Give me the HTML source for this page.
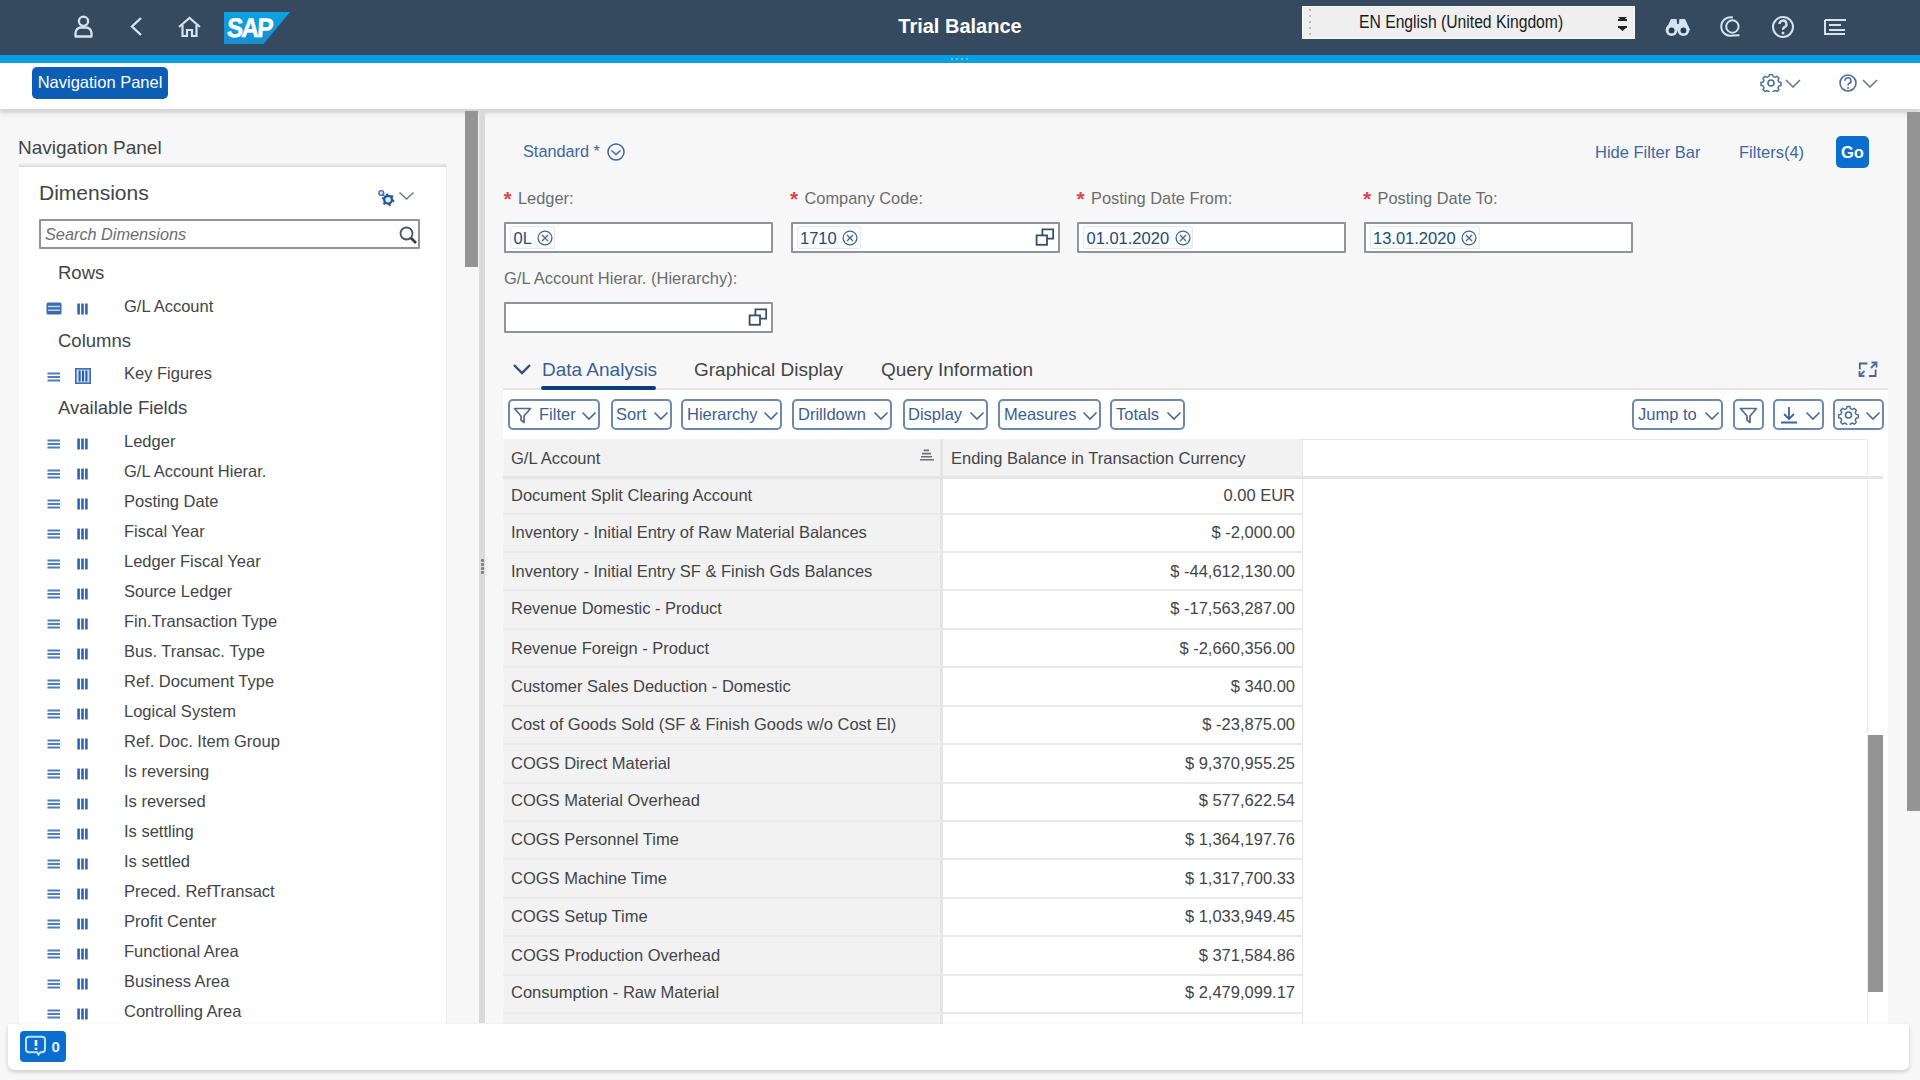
<!DOCTYPE html>
<html><head><meta charset="utf-8"><title>Trial Balance</title>
<style>
html,body{margin:0;padding:0;width:1920px;height:1080px;overflow:hidden;background:#f7f7f7;font-family:"Liberation Sans", sans-serif;}
.t{position:absolute;white-space:nowrap;}
.r{position:absolute;box-sizing:border-box;}
</style></head><body>
<div class="r" style="left:0px;top:0px;width:1920px;height:55px;background:#354a5f"></div>
<div class="r" style="left:0px;top:55px;width:1920px;height:8px;background:#0a9fe3"></div>
<div class="r" style="left:951px;top:58px;width:2px;height:2px;background:#5fc0ee"></div>
<div class="r" style="left:956px;top:58px;width:2px;height:2px;background:#5fc0ee"></div>
<div class="r" style="left:961px;top:58px;width:2px;height:2px;background:#5fc0ee"></div>
<div class="r" style="left:966px;top:58px;width:2px;height:2px;background:#5fc0ee"></div>
<svg class="r" style="left:73px;top:15px" width="21" height="23" viewBox="0 0 21 23"><circle cx="10.5" cy="6.2" r="4.6" fill="none" stroke="#d1e3f4" stroke-width="2.3"/><path d="M2.5 21.5 v-3.5 a5.5 5.5 0 0 1 5.5 -5.5 h5 a5.5 5.5 0 0 1 5.5 5.5 v3.5 z" fill="none" stroke="#d1e3f4" stroke-width="2.3" stroke-linejoin="round"/></svg>
<svg class="r" style="left:129px;top:16px" width="15" height="21" viewBox="0 0 15 21"><path d="M12 2 L3 10.5 L12 19" fill="none" stroke="#d1e3f4" stroke-width="2.4"/></svg>
<svg class="r" style="left:177px;top:16px" width="25" height="21" viewBox="0 0 25 21"><path d="M2 11 L12.5 2 L23 11" fill="none" stroke="#d1e3f4" stroke-width="2.2"/><path d="M5.5 9 V20 H10 V14 H15 V20 H19.5 V9" fill="none" stroke="#d1e3f4" stroke-width="2.2"/></svg>
<svg class="r" style="left:224px;top:12px" width="67" height="32" viewBox="0 0 67 32"><defs><linearGradient id="sapg" x1="0" y1="0" x2="0" y2="1"><stop offset="0" stop-color="#0ca3e3"/><stop offset="1" stop-color="#168fd3"/></linearGradient></defs><path d="M0 0 H66 L39.5 32 H0 Z" fill="url(#sapg)"/><text x="0" y="0" font-family="Liberation Sans" font-weight="bold" font-size="25" fill="#fff" stroke="#fff" stroke-width="0.5" letter-spacing="-1.8" transform="translate(2.5,25.3) scale(0.97,1.08) skewX(-4)">SAP</text></svg>
<div class="t" style="left:660px;width:600px;text-align:center;top:16px;font-size:20px;line-height:20px;color:#ffffff;font-weight:bold;">Trial Balance</div>
<div class="r" style="left:1302px;top:6px;width:333px;height:33px;background:#efefef;border:1px solid #fafafa"></div>
<div class="r" style="left:1308.5px;top:8.5px;width:2.5px;height:2.5px;background:#a8a8a8;border-radius:1px"></div>
<div class="r" style="left:1308.5px;top:14.5px;width:2.5px;height:2.5px;background:#a8a8a8;border-radius:1px"></div>
<div class="r" style="left:1308.5px;top:20.5px;width:2.5px;height:2.5px;background:#a8a8a8;border-radius:1px"></div>
<div class="r" style="left:1308.5px;top:26.5px;width:2.5px;height:2.5px;background:#a8a8a8;border-radius:1px"></div>
<div class="r" style="left:1308.5px;top:32.5px;width:2.5px;height:2.5px;background:#a8a8a8;border-radius:1px"></div>
<div class="t" style="left:1359px;top:13px;font-size:18px;line-height:18px;color:#1a1a1a;transform:scaleX(0.872);transform-origin:0 0;">EN English (United Kingdom)</div>
<svg class="r" style="left:1617px;top:16px" width="11" height="16" viewBox="0 0 11 16"><path d="M1 1 H10 L5.5 5 Z" fill="#222"/><path d="M1 4 H10" stroke="#222" stroke-width="2"/><path d="M1 11 H10 L5.5 15 Z" fill="#222"/><path d="M1 11 H10" stroke="#222" stroke-width="2"/></svg>
<svg class="r" style="left:1665px;top:17px" width="26" height="20" viewBox="0 0 26 20"><circle cx="6.6" cy="13.1" r="6" fill="#d1e3f4"/><circle cx="18.4" cy="13.1" r="6" fill="#d1e3f4"/><path d="M6 1.9 H11.6 L12.8 13 H0.8 Z M14.4 1.9 H20 L25.2 13 H13.2 Z" fill="#d1e3f4"/><rect x="10" y="7" width="6" height="6" fill="#d1e3f4"/><circle cx="6.6" cy="13.4" r="2.9" fill="#2a3b4e"/><circle cx="18.4" cy="13.4" r="2.9" fill="#2a3b4e"/></svg>
<svg class="r" style="left:1718px;top:14px" width="26" height="26" viewBox="0 0 26 26"><circle cx="14.4" cy="12.5" r="6.2" fill="none" stroke="#d1e3f4" stroke-width="2"/><path d="M14.9 3.5 A9.3 9.3 0 1 0 14.9 21.5 L21.5 21.2" fill="none" stroke="#d1e3f4" stroke-width="2"/></svg>
<svg class="r" style="left:1771px;top:15px" width="24" height="24" viewBox="0 0 24 24"><circle cx="12" cy="12" r="10" fill="none" stroke="#d1e3f4" stroke-width="2"/><path d="M8.5 9 a3.5 3.5 0 1 1 5 3.2 c-1.2 .6 -1.5 1.3 -1.5 2.6" fill="none" stroke="#d1e3f4" stroke-width="2.4"/><circle cx="12" cy="18" r="1.5" fill="#d1e3f4"/></svg>
<svg class="r" style="left:1823px;top:18px" width="25" height="18" viewBox="0 0 25 18"><path d="M2 2 H23 M2 2 V16 H22 M6 7 H18 M6 12 H22" fill="none" stroke="#d1e3f4" stroke-width="2"/></svg>
<div class="r" style="left:0px;top:63px;width:1920px;height:46px;background:#fff;box-shadow:0 3.5px 2px rgba(0,0,0,0.085), 0 6px 6px rgba(0,0,0,0.05)"></div>
<div class="r" style="left:32px;top:67px;width:136px;height:32px;background:#0b5eb4;border-radius:5px"></div>
<div class="t" style="left:-200px;width:600px;text-align:center;top:74px;font-size:16.5px;line-height:16.5px;color:#ffffff;">Navigation Panel</div>
<svg class="r" style="left:1760px;top:74px" width="22" height="18" viewBox="0 0 22 18"><circle cx="11" cy="9" r="3" fill="none" stroke="#4a6e98" stroke-width="1.6"/><path d="M9.5 1.5 h3 l.5 2 l2 1 l2 -1 l2 2 l-1 2 l1 2 l2 .5 v3 l-2 .5 l-1 2 l1 2 l-2 2 l-2 -1 l-2 1 l-.5 2 h-3 l-.5 -2 l-2 -1 l-2 1 l-2 -2 l1 -2 l-1 -2 l-2 -.5 v-3 l2 -.5 l1 -2 l-1 -2 l2 -2 l2 1 l2 -1 z" fill="none" stroke="#4a6e98" stroke-width="1.5" transform="translate(0,-1) scale(1,0.95)"/></svg>
<svg class="r" style="left:1785px;top:79px" width="16" height="9" viewBox="0 0 16 9"><path d="M1 1 L8 8 L15 1" fill="none" stroke="#6a7a8a" stroke-width="1.6"/></svg>
<svg class="r" style="left:1838px;top:74px" width="20" height="18" viewBox="0 0 20 18"><circle cx="10" cy="9" r="8" fill="none" stroke="#4a6e98" stroke-width="1.6"/><path d="M7 6.8 a3 3 0 1 1 4 2.8 c-.9 .4 -1 1 -1 2" fill="none" stroke="#4a6e98" stroke-width="1.6"/><circle cx="10" cy="14" r="1" fill="#4a6e98"/></svg>
<svg class="r" style="left:1862px;top:79px" width="16" height="9" viewBox="0 0 16 9"><path d="M1 1 L8 8 L15 1" fill="none" stroke="#6a7a8a" stroke-width="1.6"/></svg>
<div class="t" style="left:18px;top:138px;font-size:19px;line-height:19px;color:#424548;">Navigation Panel</div>
<div class="r" style="left:19px;top:163px;width:428px;height:4px;background:linear-gradient(to bottom, rgba(0,0,0,0), rgba(0,0,0,0.13))"></div>
<div class="r" style="left:19px;top:167px;width:428px;height:860px;background:#fff;border-right:1px solid #ededed"></div>
<div class="t" style="left:39px;top:182px;font-size:21px;line-height:21px;color:#424548;">Dimensions</div>
<svg class="r" style="left:376px;top:188px" width="19" height="19" viewBox="0 0 19 19"><circle cx="5.3" cy="5" r="2.4" fill="#cfe2f7" stroke="#3d70b4" stroke-width="1.4"/><path d="M7 6.8 L9.5 9.3" stroke="#3d70b4" stroke-width="1.4"/><circle cx="12.1" cy="11.8" r="3.9" fill="#d6f0ff" stroke="#24558f" stroke-width="2.3"/><circle cx="12.1" cy="11.8" r="5.4" fill="none" stroke="#24558f" stroke-width="1.8" stroke-dasharray="2.2 3.45"/></svg>
<svg class="r" style="left:398px;top:191px" width="17" height="10" viewBox="0 0 17 10"><path d="M1.5 1.5 L8.5 8 L15.5 1.5" fill="none" stroke="#6a7a8a" stroke-width="1.5"/></svg>
<div class="r" style="left:39px;top:219px;width:381px;height:30px;background:#fff;border:2px solid #909397;border-radius:1px"></div>
<div class="t" style="left:45px;top:226px;font-size:16.3px;line-height:16.3px;color:#6a6d70;font-style:italic;">Search Dimensions</div>
<svg class="r" style="left:398px;top:225px" width="20" height="20" viewBox="0 0 20 20"><circle cx="8.5" cy="8.5" r="6" fill="none" stroke="#4d5560" stroke-width="1.8"/><path d="M13 13 L18 18" stroke="#2b3a55" stroke-width="2.6"/></svg>
<div class="t" style="left:58px;top:264px;font-size:18.5px;line-height:18.5px;color:#424548;">Rows</div>
<div class="t" style="left:58px;top:332px;font-size:18.5px;line-height:18.5px;color:#424548;">Columns</div>
<div class="t" style="left:58px;top:399px;font-size:18.5px;line-height:18.5px;color:#424548;">Available Fields</div>
<svg class="r" style="left:46px;top:302px" width="16" height="13" viewBox="0 0 16 13"><rect x="0.5" y="0.5" width="15" height="12" rx="1.5" fill="#3a6cae"/><path d="M2 4.6 H14 M2 8.2 H14" stroke="#b9d2ee" stroke-width="1.5"/></svg>
<svg class="r" style="left:77px;top:303px" width="11" height="12" viewBox="0 0 11 12"><path d="M1.6 0.5 V11.5 M5.5 0.5 V11.5 M9.4 0.5 V11.5" stroke="#2f65b3" stroke-width="2.6"/></svg>
<div class="t" style="left:124px;top:298px;font-size:16.5px;line-height:16.5px;color:#424548;">G/L Account</div>
<svg class="r" style="left:47px;top:371.5px" width="14" height="10" viewBox="0 0 14 10"><path d="M0.5 1.5 H13 M0.5 5 H13 M0.5 8.5 H13" stroke="#4d7fc2" stroke-width="2.2"/></svg>
<svg class="r" style="left:75px;top:368px" width="16" height="16" viewBox="0 0 16 16"><rect x="0.8" y="0.8" width="14.4" height="14.4" fill="#c9dcf3" stroke="#3c6fb5" stroke-width="1.6"/><path d="M4.6 2.5 V13.5 M8 2.5 V13.5 M11.4 2.5 V13.5" stroke="#2a5ea8" stroke-width="2"/></svg>
<div class="t" style="left:124px;top:365px;font-size:16.5px;line-height:16.5px;color:#424548;">Key Figures</div>
<svg class="r" style="left:47px;top:439px" width="14" height="10" viewBox="0 0 14 10"><path d="M0.5 1.5 H13 M0.5 5 H13 M0.5 8.5 H13" stroke="#4d7fc2" stroke-width="2.2"/></svg>
<svg class="r" style="left:77px;top:438px" width="11" height="12" viewBox="0 0 11 12"><path d="M1.6 0.5 V11.5 M5.5 0.5 V11.5 M9.4 0.5 V11.5" stroke="#2f65b3" stroke-width="2.6"/></svg>
<div class="t" style="left:124px;top:433px;font-size:16.5px;line-height:16.5px;color:#424548;">Ledger</div>
<svg class="r" style="left:47px;top:469px" width="14" height="10" viewBox="0 0 14 10"><path d="M0.5 1.5 H13 M0.5 5 H13 M0.5 8.5 H13" stroke="#4d7fc2" stroke-width="2.2"/></svg>
<svg class="r" style="left:77px;top:468px" width="11" height="12" viewBox="0 0 11 12"><path d="M1.6 0.5 V11.5 M5.5 0.5 V11.5 M9.4 0.5 V11.5" stroke="#2f65b3" stroke-width="2.6"/></svg>
<div class="t" style="left:124px;top:463px;font-size:16.5px;line-height:16.5px;color:#424548;">G/L Account Hierar.</div>
<svg class="r" style="left:47px;top:499px" width="14" height="10" viewBox="0 0 14 10"><path d="M0.5 1.5 H13 M0.5 5 H13 M0.5 8.5 H13" stroke="#4d7fc2" stroke-width="2.2"/></svg>
<svg class="r" style="left:77px;top:498px" width="11" height="12" viewBox="0 0 11 12"><path d="M1.6 0.5 V11.5 M5.5 0.5 V11.5 M9.4 0.5 V11.5" stroke="#2f65b3" stroke-width="2.6"/></svg>
<div class="t" style="left:124px;top:493px;font-size:16.5px;line-height:16.5px;color:#424548;">Posting Date</div>
<svg class="r" style="left:47px;top:529px" width="14" height="10" viewBox="0 0 14 10"><path d="M0.5 1.5 H13 M0.5 5 H13 M0.5 8.5 H13" stroke="#4d7fc2" stroke-width="2.2"/></svg>
<svg class="r" style="left:77px;top:528px" width="11" height="12" viewBox="0 0 11 12"><path d="M1.6 0.5 V11.5 M5.5 0.5 V11.5 M9.4 0.5 V11.5" stroke="#2f65b3" stroke-width="2.6"/></svg>
<div class="t" style="left:124px;top:523px;font-size:16.5px;line-height:16.5px;color:#424548;">Fiscal Year</div>
<svg class="r" style="left:47px;top:559px" width="14" height="10" viewBox="0 0 14 10"><path d="M0.5 1.5 H13 M0.5 5 H13 M0.5 8.5 H13" stroke="#4d7fc2" stroke-width="2.2"/></svg>
<svg class="r" style="left:77px;top:558px" width="11" height="12" viewBox="0 0 11 12"><path d="M1.6 0.5 V11.5 M5.5 0.5 V11.5 M9.4 0.5 V11.5" stroke="#2f65b3" stroke-width="2.6"/></svg>
<div class="t" style="left:124px;top:553px;font-size:16.5px;line-height:16.5px;color:#424548;">Ledger Fiscal Year</div>
<svg class="r" style="left:47px;top:589px" width="14" height="10" viewBox="0 0 14 10"><path d="M0.5 1.5 H13 M0.5 5 H13 M0.5 8.5 H13" stroke="#4d7fc2" stroke-width="2.2"/></svg>
<svg class="r" style="left:77px;top:588px" width="11" height="12" viewBox="0 0 11 12"><path d="M1.6 0.5 V11.5 M5.5 0.5 V11.5 M9.4 0.5 V11.5" stroke="#2f65b3" stroke-width="2.6"/></svg>
<div class="t" style="left:124px;top:583px;font-size:16.5px;line-height:16.5px;color:#424548;">Source Ledger</div>
<svg class="r" style="left:47px;top:619px" width="14" height="10" viewBox="0 0 14 10"><path d="M0.5 1.5 H13 M0.5 5 H13 M0.5 8.5 H13" stroke="#4d7fc2" stroke-width="2.2"/></svg>
<svg class="r" style="left:77px;top:618px" width="11" height="12" viewBox="0 0 11 12"><path d="M1.6 0.5 V11.5 M5.5 0.5 V11.5 M9.4 0.5 V11.5" stroke="#2f65b3" stroke-width="2.6"/></svg>
<div class="t" style="left:124px;top:613px;font-size:16.5px;line-height:16.5px;color:#424548;">Fin.Transaction Type</div>
<svg class="r" style="left:47px;top:649px" width="14" height="10" viewBox="0 0 14 10"><path d="M0.5 1.5 H13 M0.5 5 H13 M0.5 8.5 H13" stroke="#4d7fc2" stroke-width="2.2"/></svg>
<svg class="r" style="left:77px;top:648px" width="11" height="12" viewBox="0 0 11 12"><path d="M1.6 0.5 V11.5 M5.5 0.5 V11.5 M9.4 0.5 V11.5" stroke="#2f65b3" stroke-width="2.6"/></svg>
<div class="t" style="left:124px;top:643px;font-size:16.5px;line-height:16.5px;color:#424548;">Bus. Transac. Type</div>
<svg class="r" style="left:47px;top:679px" width="14" height="10" viewBox="0 0 14 10"><path d="M0.5 1.5 H13 M0.5 5 H13 M0.5 8.5 H13" stroke="#4d7fc2" stroke-width="2.2"/></svg>
<svg class="r" style="left:77px;top:678px" width="11" height="12" viewBox="0 0 11 12"><path d="M1.6 0.5 V11.5 M5.5 0.5 V11.5 M9.4 0.5 V11.5" stroke="#2f65b3" stroke-width="2.6"/></svg>
<div class="t" style="left:124px;top:673px;font-size:16.5px;line-height:16.5px;color:#424548;">Ref. Document Type</div>
<svg class="r" style="left:47px;top:709px" width="14" height="10" viewBox="0 0 14 10"><path d="M0.5 1.5 H13 M0.5 5 H13 M0.5 8.5 H13" stroke="#4d7fc2" stroke-width="2.2"/></svg>
<svg class="r" style="left:77px;top:708px" width="11" height="12" viewBox="0 0 11 12"><path d="M1.6 0.5 V11.5 M5.5 0.5 V11.5 M9.4 0.5 V11.5" stroke="#2f65b3" stroke-width="2.6"/></svg>
<div class="t" style="left:124px;top:703px;font-size:16.5px;line-height:16.5px;color:#424548;">Logical System</div>
<svg class="r" style="left:47px;top:739px" width="14" height="10" viewBox="0 0 14 10"><path d="M0.5 1.5 H13 M0.5 5 H13 M0.5 8.5 H13" stroke="#4d7fc2" stroke-width="2.2"/></svg>
<svg class="r" style="left:77px;top:738px" width="11" height="12" viewBox="0 0 11 12"><path d="M1.6 0.5 V11.5 M5.5 0.5 V11.5 M9.4 0.5 V11.5" stroke="#2f65b3" stroke-width="2.6"/></svg>
<div class="t" style="left:124px;top:733px;font-size:16.5px;line-height:16.5px;color:#424548;">Ref. Doc. Item Group</div>
<svg class="r" style="left:47px;top:769px" width="14" height="10" viewBox="0 0 14 10"><path d="M0.5 1.5 H13 M0.5 5 H13 M0.5 8.5 H13" stroke="#4d7fc2" stroke-width="2.2"/></svg>
<svg class="r" style="left:77px;top:768px" width="11" height="12" viewBox="0 0 11 12"><path d="M1.6 0.5 V11.5 M5.5 0.5 V11.5 M9.4 0.5 V11.5" stroke="#2f65b3" stroke-width="2.6"/></svg>
<div class="t" style="left:124px;top:763px;font-size:16.5px;line-height:16.5px;color:#424548;">Is reversing</div>
<svg class="r" style="left:47px;top:799px" width="14" height="10" viewBox="0 0 14 10"><path d="M0.5 1.5 H13 M0.5 5 H13 M0.5 8.5 H13" stroke="#4d7fc2" stroke-width="2.2"/></svg>
<svg class="r" style="left:77px;top:798px" width="11" height="12" viewBox="0 0 11 12"><path d="M1.6 0.5 V11.5 M5.5 0.5 V11.5 M9.4 0.5 V11.5" stroke="#2f65b3" stroke-width="2.6"/></svg>
<div class="t" style="left:124px;top:793px;font-size:16.5px;line-height:16.5px;color:#424548;">Is reversed</div>
<svg class="r" style="left:47px;top:829px" width="14" height="10" viewBox="0 0 14 10"><path d="M0.5 1.5 H13 M0.5 5 H13 M0.5 8.5 H13" stroke="#4d7fc2" stroke-width="2.2"/></svg>
<svg class="r" style="left:77px;top:828px" width="11" height="12" viewBox="0 0 11 12"><path d="M1.6 0.5 V11.5 M5.5 0.5 V11.5 M9.4 0.5 V11.5" stroke="#2f65b3" stroke-width="2.6"/></svg>
<div class="t" style="left:124px;top:823px;font-size:16.5px;line-height:16.5px;color:#424548;">Is settling</div>
<svg class="r" style="left:47px;top:859px" width="14" height="10" viewBox="0 0 14 10"><path d="M0.5 1.5 H13 M0.5 5 H13 M0.5 8.5 H13" stroke="#4d7fc2" stroke-width="2.2"/></svg>
<svg class="r" style="left:77px;top:858px" width="11" height="12" viewBox="0 0 11 12"><path d="M1.6 0.5 V11.5 M5.5 0.5 V11.5 M9.4 0.5 V11.5" stroke="#2f65b3" stroke-width="2.6"/></svg>
<div class="t" style="left:124px;top:853px;font-size:16.5px;line-height:16.5px;color:#424548;">Is settled</div>
<svg class="r" style="left:47px;top:889px" width="14" height="10" viewBox="0 0 14 10"><path d="M0.5 1.5 H13 M0.5 5 H13 M0.5 8.5 H13" stroke="#4d7fc2" stroke-width="2.2"/></svg>
<svg class="r" style="left:77px;top:888px" width="11" height="12" viewBox="0 0 11 12"><path d="M1.6 0.5 V11.5 M5.5 0.5 V11.5 M9.4 0.5 V11.5" stroke="#2f65b3" stroke-width="2.6"/></svg>
<div class="t" style="left:124px;top:883px;font-size:16.5px;line-height:16.5px;color:#424548;">Preced. RefTransact</div>
<svg class="r" style="left:47px;top:919px" width="14" height="10" viewBox="0 0 14 10"><path d="M0.5 1.5 H13 M0.5 5 H13 M0.5 8.5 H13" stroke="#4d7fc2" stroke-width="2.2"/></svg>
<svg class="r" style="left:77px;top:918px" width="11" height="12" viewBox="0 0 11 12"><path d="M1.6 0.5 V11.5 M5.5 0.5 V11.5 M9.4 0.5 V11.5" stroke="#2f65b3" stroke-width="2.6"/></svg>
<div class="t" style="left:124px;top:913px;font-size:16.5px;line-height:16.5px;color:#424548;">Profit Center</div>
<svg class="r" style="left:47px;top:949px" width="14" height="10" viewBox="0 0 14 10"><path d="M0.5 1.5 H13 M0.5 5 H13 M0.5 8.5 H13" stroke="#4d7fc2" stroke-width="2.2"/></svg>
<svg class="r" style="left:77px;top:948px" width="11" height="12" viewBox="0 0 11 12"><path d="M1.6 0.5 V11.5 M5.5 0.5 V11.5 M9.4 0.5 V11.5" stroke="#2f65b3" stroke-width="2.6"/></svg>
<div class="t" style="left:124px;top:943px;font-size:16.5px;line-height:16.5px;color:#424548;">Functional Area</div>
<svg class="r" style="left:47px;top:979px" width="14" height="10" viewBox="0 0 14 10"><path d="M0.5 1.5 H13 M0.5 5 H13 M0.5 8.5 H13" stroke="#4d7fc2" stroke-width="2.2"/></svg>
<svg class="r" style="left:77px;top:978px" width="11" height="12" viewBox="0 0 11 12"><path d="M1.6 0.5 V11.5 M5.5 0.5 V11.5 M9.4 0.5 V11.5" stroke="#2f65b3" stroke-width="2.6"/></svg>
<div class="t" style="left:124px;top:973px;font-size:16.5px;line-height:16.5px;color:#424548;">Business Area</div>
<svg class="r" style="left:47px;top:1009px" width="14" height="10" viewBox="0 0 14 10"><path d="M0.5 1.5 H13 M0.5 5 H13 M0.5 8.5 H13" stroke="#4d7fc2" stroke-width="2.2"/></svg>
<svg class="r" style="left:77px;top:1008px" width="11" height="12" viewBox="0 0 11 12"><path d="M1.6 0.5 V11.5 M5.5 0.5 V11.5 M9.4 0.5 V11.5" stroke="#2f65b3" stroke-width="2.6"/></svg>
<div class="t" style="left:124px;top:1003px;font-size:16.5px;line-height:16.5px;color:#424548;">Controlling Area</div>
<div class="r" style="left:465px;top:111px;width:13px;height:156px;background:#949494"></div>
<div class="r" style="left:479px;top:110px;width:6px;height:913px;background:#dadada"></div>
<div class="r" style="left:485px;top:557px;width:3px;height:19px;background:#eef2f6"></div>
<div class="r" style="left:480.5px;top:559.0px;width:3.5px;height:2.6px;background:#808080;border-radius:1px"></div>
<div class="r" style="left:480.5px;top:563.1px;width:3.5px;height:2.6px;background:#808080;border-radius:1px"></div>
<div class="r" style="left:480.5px;top:567.2px;width:3.5px;height:2.6px;background:#808080;border-radius:1px"></div>
<div class="r" style="left:480.5px;top:571.3px;width:3.5px;height:2.6px;background:#808080;border-radius:1px"></div>
<div class="t" style="left:523px;top:143px;font-size:16.3px;line-height:16.3px;color:#3e67a0;">Standard *</div>
<svg class="r" style="left:605px;top:143px" width="22" height="18" viewBox="0 0 22 18"><circle cx="11" cy="9" r="8" fill="none" stroke="#3e67a0" stroke-width="1.5"/><path d="M6.5 7.5 L11 11.5 L15.5 7.5" fill="none" stroke="#3e67a0" stroke-width="1.5"/></svg>
<div class="t" style="left:1595px;top:144px;font-size:16.5px;line-height:16.5px;color:#3e67a0;">Hide Filter Bar</div>
<div class="t" style="left:1739px;top:144px;font-size:16.5px;line-height:16.5px;color:#3e67a0;">Filters(4)</div>
<div class="r" style="left:1836px;top:136px;width:33px;height:32px;background:#0a6ed1;border-radius:5px"></div>
<div class="t" style="left:1552.5px;width:600px;text-align:center;top:144px;font-size:16.5px;line-height:16.5px;color:#fff;font-weight:bold;">Go</div>
<div class="t" style="left:503.5px;top:188px;font-size:21px;line-height:21px;color:#d9464a;font-weight:bold;">*</div>
<div class="t" style="left:518px;top:190px;font-size:16.4px;line-height:16.4px;color:#6a6d70;">Ledger:</div>
<div class="r" style="left:504px;top:222px;width:269px;height:31px;background:#fff;border:2px solid #909397;border-radius:1px"></div>
<div class="t" style="left:790.0px;top:188px;font-size:21px;line-height:21px;color:#d9464a;font-weight:bold;">*</div>
<div class="t" style="left:804.5px;top:190px;font-size:16.4px;line-height:16.4px;color:#6a6d70;">Company Code:</div>
<div class="r" style="left:790.5px;top:222px;width:269px;height:31px;background:#fff;border:2px solid #909397;border-radius:1px"></div>
<div class="t" style="left:1076.5px;top:188px;font-size:21px;line-height:21px;color:#d9464a;font-weight:bold;">*</div>
<div class="t" style="left:1091px;top:190px;font-size:16.4px;line-height:16.4px;color:#6a6d70;">Posting Date From:</div>
<div class="r" style="left:1077px;top:222px;width:269px;height:31px;background:#fff;border:2px solid #909397;border-radius:1px"></div>
<div class="t" style="left:1363.0px;top:188px;font-size:21px;line-height:21px;color:#d9464a;font-weight:bold;">*</div>
<div class="t" style="left:1377.5px;top:190px;font-size:16.4px;line-height:16.4px;color:#6a6d70;">Posting Date To:</div>
<div class="r" style="left:1363.5px;top:222px;width:269px;height:31px;background:#fff;border:2px solid #909397;border-radius:1px"></div>
<div class="r" style="left:510px;top:226px;width:45px;height:23px;background:#f9fbfd;border:1px solid #e6ebf0;border-radius:2px"></div>
<div class="t" style="left:513.5px;top:230px;font-size:16.5px;line-height:16.5px;color:#2a4a70;">0L</div>
<svg class="r" style="left:537.4px;top:229.5px" width="16" height="16" viewBox="0 0 16 16"><circle cx="8" cy="8" r="6.9" fill="none" stroke="#4a6489" stroke-width="1.3"/><path d="M5 5 L11 11 M11 5 L5 11" stroke="#4a6489" stroke-width="1.3"/></svg>
<div class="r" style="left:796.5px;top:226px;width:64px;height:23px;background:#f9fbfd;border:1px solid #e6ebf0;border-radius:2px"></div>
<div class="t" style="left:800.0px;top:230px;font-size:16.5px;line-height:16.5px;color:#2a4a70;">1710</div>
<svg class="r" style="left:842.2px;top:229.5px" width="16" height="16" viewBox="0 0 16 16"><circle cx="8" cy="8" r="6.9" fill="none" stroke="#4a6489" stroke-width="1.3"/><path d="M5 5 L11 11 M11 5 L5 11" stroke="#4a6489" stroke-width="1.3"/></svg>
<div class="r" style="left:1083px;top:226px;width:110px;height:23px;background:#f9fbfd;border:1px solid #e6ebf0;border-radius:2px"></div>
<div class="t" style="left:1086.5px;top:230px;font-size:16.5px;line-height:16.5px;color:#2a4a70;">01.01.2020</div>
<svg class="r" style="left:1174.6px;top:229.5px" width="16" height="16" viewBox="0 0 16 16"><circle cx="8" cy="8" r="6.9" fill="none" stroke="#4a6489" stroke-width="1.3"/><path d="M5 5 L11 11 M11 5 L5 11" stroke="#4a6489" stroke-width="1.3"/></svg>
<div class="r" style="left:1369.5px;top:226px;width:110px;height:23px;background:#f9fbfd;border:1px solid #e6ebf0;border-radius:2px"></div>
<div class="t" style="left:1373.0px;top:230px;font-size:16.5px;line-height:16.5px;color:#2a4a70;">13.01.2020</div>
<svg class="r" style="left:1461.1px;top:229.5px" width="16" height="16" viewBox="0 0 16 16"><circle cx="8" cy="8" r="6.9" fill="none" stroke="#4a6489" stroke-width="1.3"/><path d="M5 5 L11 11 M11 5 L5 11" stroke="#4a6489" stroke-width="1.3"/></svg>
<svg class="r" style="left:1035px;top:228px" width="19" height="18" viewBox="0 0 19 18"><rect x="1.6" y="7.4" width="10.4" height="9.4" fill="none" stroke="#3a4d68" stroke-width="1.8"/><path d="M7.4 7.4 V1.4 H18.2 V10.7 H12" fill="none" stroke="#3a4d68" stroke-width="1.8"/></svg>
<div class="t" style="left:504px;top:270px;font-size:16.5px;line-height:16.5px;color:#6a6d70;">G/L Account Hierar. (Hierarchy):</div>
<div class="r" style="left:504px;top:302px;width:269px;height:31px;background:#fff;border:2px solid #909397;border-radius:1px"></div>
<svg class="r" style="left:748px;top:308px" width="19" height="18" viewBox="0 0 19 18"><rect x="1.6" y="7.4" width="10.4" height="9.4" fill="none" stroke="#3a4d68" stroke-width="1.8"/><path d="M7.4 7.4 V1.4 H18.2 V10.7 H12" fill="none" stroke="#3a4d68" stroke-width="1.8"/></svg>
<svg class="r" style="left:512px;top:363px" width="20" height="13" viewBox="0 0 20 13"><path d="M2 2 L10 10 L18 2" fill="none" stroke="#2e4f7a" stroke-width="2.4"/></svg>
<div class="t" style="left:542px;top:360px;font-size:19px;line-height:19px;color:#3a5f96;">Data Analysis</div>
<div class="t" style="left:694px;top:360px;font-size:19px;line-height:19px;color:#424548;">Graphical Display</div>
<div class="t" style="left:881px;top:360px;font-size:19px;line-height:19px;color:#424548;">Query Information</div>
<svg class="r" style="left:1856px;top:359px" width="24" height="21" viewBox="0 0 24 21"><path d="M3.8 10.5 V4.5 H11.5 M19.6 10.5 V17 H13" fill="none" stroke="#54657a" stroke-width="1.8"/><path d="M15 9 L20.5 3.5 M15.5 3.5 H20.5 V8.5 M8.5 12 L3.5 17 M3.5 12 V17 H8.5" fill="none" stroke="#4a6f9e" stroke-width="1.8"/></svg>
<div class="r" style="left:503px;top:388px;width:1385px;height:2px;background:#e3e3e3"></div>
<div class="r" style="left:541px;top:386px;width:115px;height:4px;background:#0b3f7b;border-radius:2px"></div>
<div class="r" style="left:503px;top:390px;width:1385px;height:635px;background:#fff"></div>
<div class="r" style="left:507.5px;top:399px;width:92.0px;height:31px;border:2px solid #6a8ab2;border-radius:5px;background:#fff"></div>
<div class="t" style="left:539px;top:406px;font-size:16.5px;line-height:16.5px;color:#3b5e92;">Filter</div>
<svg class="r" style="left:580.5px;top:411px" width="16" height="10" viewBox="0 0 16 10"><path d="M1.5 1.5 L8 8 L14.5 1.5" fill="none" stroke="#4b6a92" stroke-width="1.6"/></svg>
<svg class="r" style="left:513px;top:407px" width="19" height="17" viewBox="0 0 19 17"><path d="M1.5 1.5 H17.5 L11 9 V15.5 L8 13 V9 Z" fill="none" stroke="#4b6a92" stroke-width="1.7" stroke-linejoin="round"/></svg>
<div class="r" style="left:610.5px;top:399px;width:61.0px;height:31px;border:2px solid #6a8ab2;border-radius:5px;background:#fff"></div>
<div class="t" style="left:616px;top:406px;font-size:16.5px;line-height:16.5px;color:#3b5e92;">Sort</div>
<svg class="r" style="left:652.5px;top:411px" width="16" height="10" viewBox="0 0 16 10"><path d="M1.5 1.5 L8 8 L14.5 1.5" fill="none" stroke="#4b6a92" stroke-width="1.6"/></svg>
<div class="r" style="left:681px;top:399px;width:101px;height:31px;border:2px solid #6a8ab2;border-radius:5px;background:#fff"></div>
<div class="t" style="left:687px;top:406px;font-size:16.5px;line-height:16.5px;color:#3b5e92;">Hierarchy</div>
<svg class="r" style="left:763px;top:411px" width="16" height="10" viewBox="0 0 16 10"><path d="M1.5 1.5 L8 8 L14.5 1.5" fill="none" stroke="#4b6a92" stroke-width="1.6"/></svg>
<div class="r" style="left:792px;top:399px;width:100px;height:31px;border:2px solid #6a8ab2;border-radius:5px;background:#fff"></div>
<div class="t" style="left:798px;top:406px;font-size:16.5px;line-height:16.5px;color:#3b5e92;">Drilldown</div>
<svg class="r" style="left:873px;top:411px" width="16" height="10" viewBox="0 0 16 10"><path d="M1.5 1.5 L8 8 L14.5 1.5" fill="none" stroke="#4b6a92" stroke-width="1.6"/></svg>
<div class="r" style="left:903px;top:399px;width:85px;height:31px;border:2px solid #6a8ab2;border-radius:5px;background:#fff"></div>
<div class="t" style="left:908px;top:406px;font-size:16.5px;line-height:16.5px;color:#3b5e92;">Display</div>
<svg class="r" style="left:969px;top:411px" width="16" height="10" viewBox="0 0 16 10"><path d="M1.5 1.5 L8 8 L14.5 1.5" fill="none" stroke="#4b6a92" stroke-width="1.6"/></svg>
<div class="r" style="left:998px;top:399px;width:103px;height:31px;border:2px solid #6a8ab2;border-radius:5px;background:#fff"></div>
<div class="t" style="left:1004px;top:406px;font-size:16.5px;line-height:16.5px;color:#3b5e92;">Measures</div>
<svg class="r" style="left:1082px;top:411px" width="16" height="10" viewBox="0 0 16 10"><path d="M1.5 1.5 L8 8 L14.5 1.5" fill="none" stroke="#4b6a92" stroke-width="1.6"/></svg>
<div class="r" style="left:1110px;top:399px;width:75px;height:31px;border:2px solid #6a8ab2;border-radius:5px;background:#fff"></div>
<div class="t" style="left:1116px;top:406px;font-size:16.5px;line-height:16.5px;color:#3b5e92;">Totals</div>
<svg class="r" style="left:1166px;top:411px" width="16" height="10" viewBox="0 0 16 10"><path d="M1.5 1.5 L8 8 L14.5 1.5" fill="none" stroke="#4b6a92" stroke-width="1.6"/></svg>
<div class="r" style="left:1632px;top:399px;width:91px;height:31px;border:2px solid #6a8ab2;border-radius:5px;background:#fff"></div>
<div class="t" style="left:1638px;top:406px;font-size:16.5px;line-height:16.5px;color:#3b5e92;">Jump to</div>
<svg class="r" style="left:1704px;top:411px" width="16" height="10" viewBox="0 0 16 10"><path d="M1.5 1.5 L8 8 L14.5 1.5" fill="none" stroke="#4b6a92" stroke-width="1.6"/></svg>
<div class="r" style="left:1732.5px;top:399px;width:31.5px;height:31px;border:2px solid #6a8ab2;border-radius:5px;background:#fff"></div>
<svg class="r" style="left:1739px;top:407px" width="19" height="17" viewBox="0 0 19 17"><path d="M1.5 1.5 H17.5 L11 9 V15.5 L8 13 V9 Z" fill="none" stroke="#4b6a92" stroke-width="1.7" stroke-linejoin="round"/></svg>
<div class="r" style="left:1773px;top:399px;width:51px;height:31px;border:2px solid #6a8ab2;border-radius:5px;background:#fff"></div>
<svg class="r" style="left:1805px;top:411px" width="16" height="10" viewBox="0 0 16 10"><path d="M1.5 1.5 L8 8 L14.5 1.5" fill="none" stroke="#4b6a92" stroke-width="1.6"/></svg>
<svg class="r" style="left:1779px;top:406px" width="20" height="18" viewBox="0 0 20 18"><path d="M10 1 V13 M5 8 L10 13 L15 8 M2 16.5 H18" fill="none" stroke="#3a62a0" stroke-width="1.8"/></svg>
<div class="r" style="left:1833px;top:399px;width:51px;height:31px;border:2px solid #6a8ab2;border-radius:5px;background:#fff"></div>
<svg class="r" style="left:1865px;top:411px" width="16" height="10" viewBox="0 0 16 10"><path d="M1.5 1.5 L8 8 L14.5 1.5" fill="none" stroke="#4b6a92" stroke-width="1.6"/></svg>
<svg class="r" style="left:1838px;top:405px" width="21" height="20" viewBox="0 0 21 20"><circle cx="10.5" cy="10" r="3" fill="none" stroke="#4b6a92" stroke-width="1.6"/><path d="M9 1.5 h3 l.5 2.3 l2 1 l2.2 -1.2 l2.1 2.1 l-1.2 2.2 l1 2 l2.3 .5 v3 l-2.3 .5 l-1 2 l1.2 2.2 l-2.1 2.1 l-2.2 -1.2 l-2 1 l-.5 2.3 h-3 l-.5 -2.3 l-2 -1 l-2.2 1.2 l-2.1 -2.1 l1.2 -2.2 l-1 -2 l-2.3 -.5 v-3 l2.3 -.5 l1 -2 l-1.2 -2.2 l2.1 -2.1 l2.2 1.2 l2 -1 z" fill="none" stroke="#4b6a92" stroke-width="1.5" transform="translate(0.5,0) scale(0.95)"/></svg>
<div class="r" style="left:503px;top:439px;width:1365px;height:40px;border-top:1px solid #e8e8e8;border-right:1px solid #e8e8e8"></div>
<div class="r" style="left:503px;top:439px;width:800px;height:37px;background:#f2f2f2"></div>
<div class="r" style="left:503px;top:476px;width:1380px;height:3px;background:#e5e5e5"></div>
<div class="r" style="left:940px;top:439px;width:3px;height:585px;background:#e5e5e5"></div>
<div class="r" style="left:1302px;top:439px;width:1px;height:585px;background:#e5e5e5"></div>
<div class="r" style="left:1867px;top:439px;width:1px;height:585px;background:#ececec"></div>
<div class="t" style="left:511px;top:450px;font-size:16.5px;line-height:16.5px;color:#424548;">G/L Account</div>
<svg class="r" style="left:918px;top:448px" width="17" height="13" viewBox="0 0 17 13"><path d="M5.6 2.4 H10.9 M4 5.6 H13 M3 8.7 H14 M2 11.8 H16" stroke="#6b6f74" stroke-width="1.6"/></svg>
<div class="t" style="left:951px;top:450px;font-size:16.5px;line-height:16.5px;color:#424548;">Ending Balance in Transaction Currency</div>
<div class="r" style="left:503px;top:479px;width:437px;height:545px;background:#f2f2f2"></div>
<div class="t" style="left:511px;top:487px;font-size:16.5px;line-height:16.5px;color:#424548;">Document Split Clearing Account</div>
<div class="t" style="right:625px;text-align:right;top:487px;font-size:16.5px;line-height:16.5px;color:#424548;">0.00 EUR</div>
<div class="r" style="left:503px;top:512.5px;width:800px;height:2px;background:#e9e9e9"></div>
<div class="t" style="left:511px;top:524px;font-size:16.5px;line-height:16.5px;color:#424548;">Inventory - Initial Entry of Raw Material Balances</div>
<div class="t" style="right:625px;text-align:right;top:524px;font-size:16.5px;line-height:16.5px;color:#424548;">$ -2,000.00</div>
<div class="r" style="left:503px;top:550.94px;width:800px;height:2px;background:#e9e9e9"></div>
<div class="t" style="left:511px;top:563px;font-size:16.5px;line-height:16.5px;color:#424548;">Inventory - Initial Entry SF &amp; Finish Gds Balances</div>
<div class="t" style="right:625px;text-align:right;top:563px;font-size:16.5px;line-height:16.5px;color:#424548;">$ -44,612,130.00</div>
<div class="r" style="left:503px;top:589.38px;width:800px;height:2px;background:#e9e9e9"></div>
<div class="t" style="left:511px;top:600px;font-size:16.5px;line-height:16.5px;color:#424548;">Revenue Domestic - Product</div>
<div class="t" style="right:625px;text-align:right;top:600px;font-size:16.5px;line-height:16.5px;color:#424548;">$ -17,563,287.00</div>
<div class="r" style="left:503px;top:627.8199999999999px;width:800px;height:2px;background:#e9e9e9"></div>
<div class="t" style="left:511px;top:640px;font-size:16.5px;line-height:16.5px;color:#424548;">Revenue Foreign - Product</div>
<div class="t" style="right:625px;text-align:right;top:640px;font-size:16.5px;line-height:16.5px;color:#424548;">$ -2,660,356.00</div>
<div class="r" style="left:503px;top:666.26px;width:800px;height:2px;background:#e9e9e9"></div>
<div class="t" style="left:511px;top:678px;font-size:16.5px;line-height:16.5px;color:#424548;">Customer Sales Deduction - Domestic</div>
<div class="t" style="right:625px;text-align:right;top:678px;font-size:16.5px;line-height:16.5px;color:#424548;">$ 340.00</div>
<div class="r" style="left:503px;top:704.7px;width:800px;height:2px;background:#e9e9e9"></div>
<div class="t" style="left:511px;top:716px;font-size:16.5px;line-height:16.5px;color:#424548;">Cost of Goods Sold (SF &amp; Finish Goods w/o Cost El)</div>
<div class="t" style="right:625px;text-align:right;top:716px;font-size:16.5px;line-height:16.5px;color:#424548;">$ -23,875.00</div>
<div class="r" style="left:503px;top:743.14px;width:800px;height:2px;background:#e9e9e9"></div>
<div class="t" style="left:511px;top:755px;font-size:16.5px;line-height:16.5px;color:#424548;">COGS Direct Material</div>
<div class="t" style="right:625px;text-align:right;top:755px;font-size:16.5px;line-height:16.5px;color:#424548;">$ 9,370,955.25</div>
<div class="r" style="left:503px;top:781.5799999999999px;width:800px;height:2px;background:#e9e9e9"></div>
<div class="t" style="left:511px;top:792px;font-size:16.5px;line-height:16.5px;color:#424548;">COGS Material Overhead</div>
<div class="t" style="right:625px;text-align:right;top:792px;font-size:16.5px;line-height:16.5px;color:#424548;">$ 577,622.54</div>
<div class="r" style="left:503px;top:820.02px;width:800px;height:2px;background:#e9e9e9"></div>
<div class="t" style="left:511px;top:831px;font-size:16.5px;line-height:16.5px;color:#424548;">COGS Personnel Time</div>
<div class="t" style="right:625px;text-align:right;top:831px;font-size:16.5px;line-height:16.5px;color:#424548;">$ 1,364,197.76</div>
<div class="r" style="left:503px;top:858.46px;width:800px;height:2px;background:#e9e9e9"></div>
<div class="t" style="left:511px;top:870px;font-size:16.5px;line-height:16.5px;color:#424548;">COGS Machine Time</div>
<div class="t" style="right:625px;text-align:right;top:870px;font-size:16.5px;line-height:16.5px;color:#424548;">$ 1,317,700.33</div>
<div class="r" style="left:503px;top:896.9px;width:800px;height:2px;background:#e9e9e9"></div>
<div class="t" style="left:511px;top:908px;font-size:16.5px;line-height:16.5px;color:#424548;">COGS Setup Time</div>
<div class="t" style="right:625px;text-align:right;top:908px;font-size:16.5px;line-height:16.5px;color:#424548;">$ 1,033,949.45</div>
<div class="r" style="left:503px;top:935.3399999999999px;width:800px;height:2px;background:#e9e9e9"></div>
<div class="t" style="left:511px;top:947px;font-size:16.5px;line-height:16.5px;color:#424548;">COGS Production Overhead</div>
<div class="t" style="right:625px;text-align:right;top:947px;font-size:16.5px;line-height:16.5px;color:#424548;">$ 371,584.86</div>
<div class="r" style="left:503px;top:973.78px;width:800px;height:2px;background:#e9e9e9"></div>
<div class="t" style="left:511px;top:984px;font-size:16.5px;line-height:16.5px;color:#424548;">Consumption - Raw Material</div>
<div class="t" style="right:625px;text-align:right;top:984px;font-size:16.5px;line-height:16.5px;color:#424548;">$ 2,479,099.17</div>
<div class="r" style="left:503px;top:1012.22px;width:800px;height:2px;background:#e9e9e9"></div>
<div class="r" style="left:1868px;top:735px;width:15px;height:257px;background:#949494"></div>
<div class="r" style="left:1906.5px;top:111.5px;width:13.5px;height:699.5px;background:#949494"></div>
<div class="r" style="left:8px;top:1024px;width:1901px;height:46px;background:#fff;border-radius:0 0 6px 6px;box-shadow:0 2px 4px rgba(0,0,0,0.18)"></div>
<div class="r" style="left:19.5px;top:1030.5px;width:46px;height:31px;background:#0a6ed1;border-radius:4px"></div>
<svg class="r" style="left:24px;top:1035px" width="24" height="22" viewBox="0 0 24 22"><path d="M5 1.8 H18 A3 3 0 0 1 21 4.8 V14.2 A3 3 0 0 1 18 17.2 H16.5 L14.5 19.5 L13 17.2 H5 A3 3 0 0 1 2 14.2 V4.8 A3 3 0 0 1 5 1.8 Z" fill="none" stroke="#bfe3ff" stroke-width="2"/><path d="M12 5 V11" stroke="#f2f8ff" stroke-width="2.6"/><rect x="10.7" y="12.6" width="2.6" height="2.4" fill="#e6f3ff"/></svg>
<div class="t" style="left:51.5px;top:1039px;font-size:15px;line-height:15px;color:#eaf4ff;font-weight:bold;">0</div>
</body></html>
